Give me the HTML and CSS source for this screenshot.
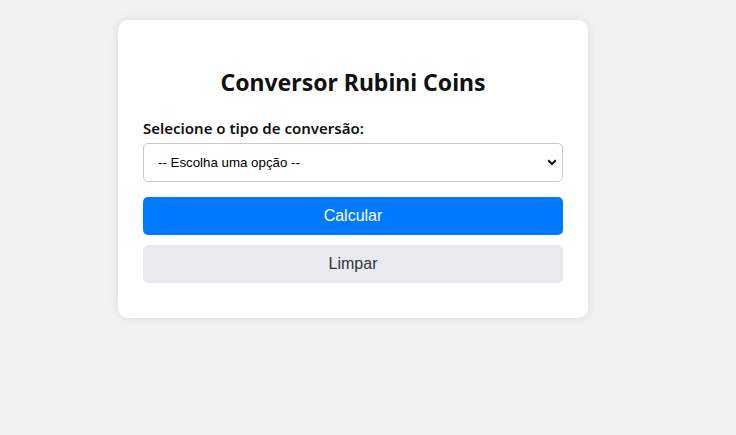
FILE: index.html
```html
<!DOCTYPE html>
<html lang="pt">
<head>
<meta charset="utf-8">
<title>Conversor Rubini Coins</title>
<link rel="stylesheet" href="styles.css">
</head>
<body>
<div class="card">
  <h2 class="title">Conversor Rubini Coins</h2>
  <label class="label" for="tipo">Selecione o tipo de conversão:</label>
  <div class="select-wrap">
    <select id="tipo" class="select">
      <option>-- Escolha uma opção --</option>
    </select>
    <svg class="chev" width="10" height="7" viewBox="0 0 10 7"><path d="M1.2 1.3 L5 5 L8.8 1.3" fill="none" stroke="#111" stroke-width="2"/></svg>
  </div>
  <button class="btn btn-primary">Calcular</button>
  <button class="btn btn-secondary">Limpar</button>
</div>
</body>
</html>
```
FILE: styles.css
```css
html, body {
  margin: 0;
  padding: 0;
}
body {
  background: #f2f2f2;
  font-family: "Noto Sans", "Open Sans", sans-serif;
  padding: 20px 0 0 118px;
  height: 435px;
  box-sizing: border-box;
}
.card {
  width: 470px;
  box-sizing: border-box;
  background: #fff;
  border-radius: 10px;
  box-shadow: 0 0 10px rgba(0,0,0,0.1);
  padding: 25px 25px 35px;
  display: flex;
  flex-direction: column;
}
.title {
  margin: 20px 0 18px;
  font-size: 23px;
  line-height: 34px;
  text-align: center;
  font-weight: 700;
  color: #111;
}
.label {
  font-size: 15px;
  font-weight: 600;
  line-height: 22px;
  color: #111;
  margin-bottom: 4px;
}
.select-wrap {
  position: relative;
}
.select {
  appearance: none;
  -webkit-appearance: none;
  width: 100%;
  height: 39px;
  border: 1px solid #c8c8c8;
  border-radius: 5px;
  background: #fff;
  font-family: "Liberation Sans", Arial, sans-serif;
  font-size: 13.3px;
  color: #000;
  padding: 0 14px;
  margin: 0;
}
.chev {
  position: absolute;
  right: 6px;
  top: 16px;
  pointer-events: none;
}
.btn {
  display: block;
  width: 100%;
  height: 38px;
  border: none;
  border-radius: 5px;
  font-family: "Liberation Sans", Arial, sans-serif;
  font-size: 16px;
  margin: 0;
  padding: 0;
}
.btn-primary {
  background: #007bff;
  color: #fff;
  margin-top: 15px;
}
.btn-secondary {
  background: #e8ebee;
  color: #333;
  margin-top: 10px;
}
```
